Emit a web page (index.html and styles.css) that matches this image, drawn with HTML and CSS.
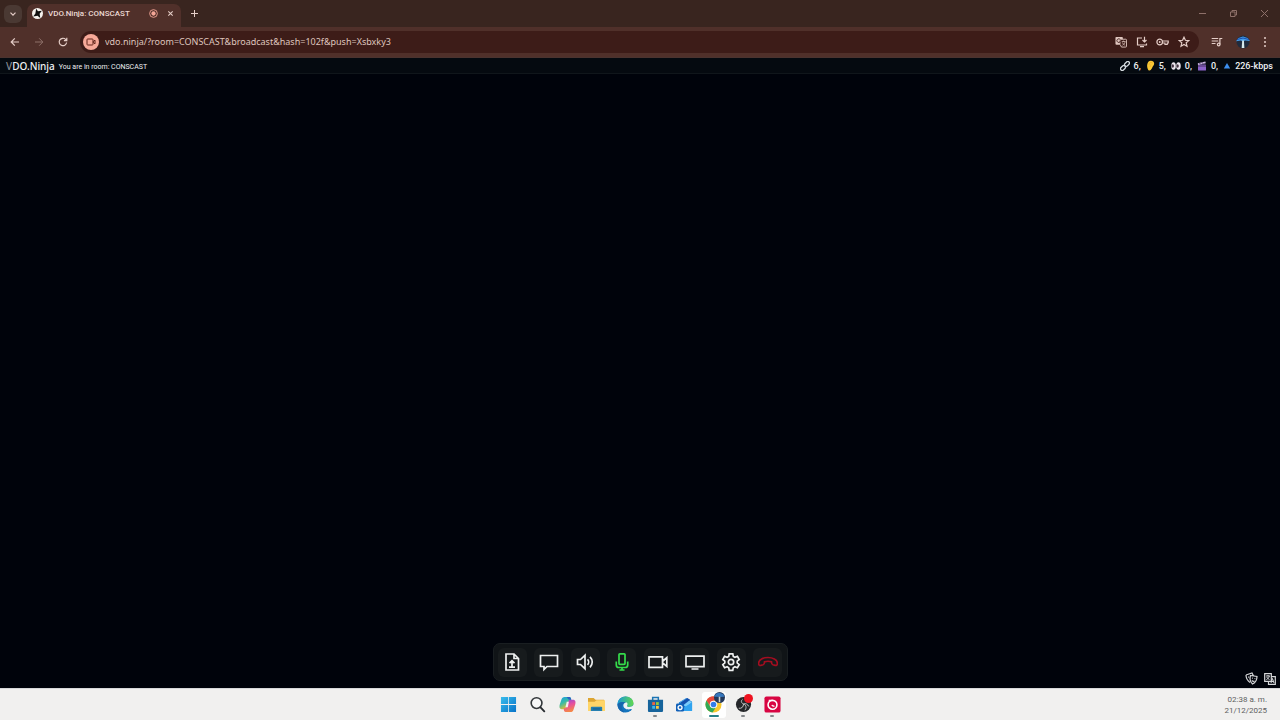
FILE: index.html
```html
<!DOCTYPE html>
<html lang="en">
<head>
<meta charset="utf-8">
<title>VDO.Ninja: CONSCAST</title>
<link rel="stylesheet" href="styles.css">
</head>
<body>
<div class="screen">
  <header class="tabstrip">
    <button class="tab-search" aria-label="Search tabs"><svg width="8" height="8" viewBox="0 0 8 8"><path d="M1.500 2.700 4 5.200l2.500-2.500" class="line"/></svg></button>
    <div class="tab">
      <svg width="11" height="11" viewBox="0 0 12 12"><circle cx="6" cy="6" r="6" fill="#f5f2ee"/><path d="M4.500.8 6.500 3.600 10.800 3 8.300 6.300 9 10.800 6 8.400 1.300 9.200 3.700 6Z" fill="#111"/></svg>
      <span class="tab-title">VDO.Ninja: CONSCAST</span>
      <svg width="9" height="9" viewBox="0 0 10 10"><circle cx="5" cy="5" r="4.300" fill="none" stroke="#f3a697"/><circle cx="5" cy="5" r="2.400" fill="#f3a697"/></svg>
      <button class="plain tab-close" aria-label="Close tab"><svg width="7" height="7" viewBox="0 0 8 8"><path d="m1.500 1.500 5 5m0-5-5 5" class="line"/></svg></button>
    </div>
    <button class="plain new-tab" aria-label="New tab"><svg width="9" height="9" viewBox="0 0 9 9"><path d="M4.500 1v7M1 4.500h7" class="line thin"/></svg></button>
    <div class="window-controls">
      <button class="plain" aria-label="Minimize"><svg width="9" height="9" viewBox="0 0 9 9"><path d="M1 4.500h7" class="dim"/></svg></button>
      <button class="plain" aria-label="Restore"><svg width="9" height="9" viewBox="0 0 9 9"><path d="M1.500 3h4.500v4.500H1.500ZM3 3V1.500h4.500V6H6" class="dim"/></svg></button>
      <button class="plain" aria-label="Close"><svg width="9" height="9" viewBox="0 0 9 9"><path d="m1 1 7 7m0-7L1 8" class="dim"/></svg></button>
    </div>
  </header>

  <nav class="toolbar">
    <div class="nav-buttons">
      <button class="plain" aria-label="Back"><svg width="10" height="10" viewBox="0 0 10 10"><path d="M9 5H1.200M4.800 1.300 1.200 5l3.600 3.700" class="line"/></svg></button>
      <button class="plain" aria-label="Forward" disabled><svg width="10" height="10" viewBox="0 0 10 10"><path d="M1 5h7.800M5.200 1.300 8.800 5 5.200 8.700" class="dim"/></svg></button>
      <button class="plain" aria-label="Reload"><svg width="10" height="10" viewBox="0 0 10 10"><path d="M8.600 5.500A3.700 3.700 0 1 1 7.600 2.400L8.500 3.400M8.800.8v2.900H5.900" class="line"/></svg></button>
    </div>
    <div class="omnibox">
      <button class="camera" aria-label="Camera in use"><svg width="10" height="10" viewBox="0 0 10 10"><rect x="1" y="2" width="6" height="6" rx=".7"/><path d="m7.300 4.500 1.700-1.300v3.600L7.300 5.500Z"/></svg></button>
      <input class="address" type="text" aria-label="Address" value="vdo.ninja/?room=CONSCAST&amp;broadcast&amp;hash=102f&amp;push=Xsbxky3">
      <div class="omni-icons">
        <button class="plain" aria-label="Translate"><svg width="12" height="12" viewBox="0 0 13 12"><rect x=".5" y=".5" width="8" height="8.500" rx="1" fill="#e0c6bf"/><path d="M6 3h5.500a1 1 0 0 1 1 1v6.500a1 1 0 0 1-1 1H7L5.800 9" fill="#3d1c18" stroke="#e0c6bf"/><path d="M7.300 5.500h4M9.300 4.500v1M11 5.500c-.3 2-1.500 3.300-3 4M8 6.500c.4 1.200 1.600 2.400 3 3" fill="none" stroke="#e0c6bf" stroke-width=".8"/><path d="M5.800 3.500a2 2 0 1 0 .2 1.700H4.600" fill="none" stroke="#3d1c18" stroke-width=".9"/></svg></button>
        <button class="plain" aria-label="Install app"><svg width="12" height="12" viewBox="0 0 12 12"><path d="M6 2H1.500v7h9V7.500M4 10.700h4M8.500.8v5M6.500 4l2 2 2-2" class="line"/></svg></button>
        <button class="plain" aria-label="Passwords"><svg width="13" height="10" viewBox="0 0 13 10"><circle cx="3.700" cy="5" r="2.800" class="line"/><circle cx="3.700" cy="5" r=".9" fill="#e5cec8"/><path d="M6.400 4h5.800v2h-1v1.500H9V6H6.400" class="line"/></svg></button>
        <button class="plain" aria-label="Bookmark"><svg width="12" height="12" viewBox="0 0 12 12"><path d="m6 1.200 1.400 3.100 3.400.3-2.600 2.200.8 3.400-3-1.800-3 1.800.8-3.400-2.600-2.200 3.400-.3Z" class="line"/></svg></button>
      </div>
    </div>
    <div class="right-icons">
      <button class="plain" aria-label="Media"><svg width="12" height="10" viewBox="0 0 12 10"><path d="M.7 1.500h6.500M.7 4h6.500M.7 6.500h3.800M8.900 7.500V1.500h2.400" class="line"/><circle cx="7.700" cy="7.500" r="1.300" class="line"/></svg></button>
      <button class="plain" aria-label="Profile"><svg width="14" height="14" viewBox="0 0 14 14"><circle cx="7" cy="7" r="6.500" fill="#202b3d"/><path d="M0 6.200 2.500 3 7 1.500 11.500 3 14 6l-5-.5L7 6.700 4.800 5.500Z" fill="#459de9"/><path d="m1 4.500 6-1.500 6 1.500" stroke="#174cad" fill="none"/><path d="M6.200 5.500h1.700l.5 7.500H5.700Z" fill="#d7ebee"/></svg></button>
      <button class="plain" aria-label="Menu"><svg width="4" height="12" viewBox="0 0 4 12" fill="#e5cec8"><circle cx="2" cy="2" r="1"/><circle cx="2" cy="6" r="1"/><circle cx="2" cy="10" r="1"/></svg></button>
    </div>
  </nav>

  <main class="page">
    <div class="room-bar">
      <a class="brand" href="#"><span class="brand-v">V</span>DO.Ninja</a>
      <span class="room-name">You are in room: CONSCAST</span>
      <div class="stats">
        <span class="stat"><svg width="10" height="10" viewBox="0 0 10 10" fill="none" stroke="#d5dbe0" stroke-width="1.300"><rect x="4.200" y="1.200" width="5.600" height="3.400" rx="1.700" transform="rotate(-45 7 2.900)"/><rect x=".2" y="5.300" width="5.600" height="3.400" rx="1.700" transform="rotate(-45 3 7)"/></svg>6,</span>
        <span class="stat"><svg width="9" height="11" viewBox="0 0 9 11"><path d="M2 9.500C.5 6.500.7 1 4.700.7 8 .5 9 3.500 7.500 5.500 6 7.500 5.500 10.300 3.500 10.500c-.8 0-1.200-.4-1.500-1Z" fill="#f8c736"/><path d="M3 5C3 2.500 5.800 1.500 6.500 3.300M4 7c.8-1 0-1.700.8-2.500" fill="none" stroke="#e8a92c" stroke-width=".8"/></svg>5,</span>
        <span class="stat"><svg width="10" height="10" viewBox="0 0 11 10"><ellipse cx="2.800" cy="5" rx="2.500" ry="4.200" fill="#eee7ef"/><ellipse cx="8.200" cy="5" rx="2.500" ry="4.200" fill="#eee7ef"/><ellipse cx="2" cy="5" rx="1.300" ry="2" fill="#443442"/><ellipse cx="7.300" cy="5" rx="1.300" ry="2" fill="#443442"/></svg>0,</span>
        <span class="stat"><svg width="10" height="10" viewBox="0 0 10 10"><rect x="1" y="3.500" width="8" height="6" rx=".6" fill="#8b63c9"/><path d="m.8 2.300 7.600-1.700.4 1.600L1 4Z" fill="#c7b4df"/><path d="m2.500 2 1 1.300M5 1.300l1 1.400M1 5h8" stroke="#493461"/></svg>0,</span>
        <span class="stat rate"><svg width="8" height="8" viewBox="0 0 8 8"><path d="m4 1 3.200 5.500H.8Z" fill="#3d8ff0"/></svg>226-kbps</span>
      </div>
    </div>

    <div class="stage"></div>

    <div class="dock-row">
      <div class="dock">
        <button class="control" aria-label="Share file"><svg viewBox="0 0 20 20"><path d="M4 2h8l4.500 4.500V18H4ZM12 2v4.500h4.500M10 15V9.300M7.500 11.200 10 8.700l2.500 2.500M7 15.200h6"/></svg></button>
        <button class="control" aria-label="Chat"><svg viewBox="0 0 20 20"><path d="M1.500 3.500h17v11H8l-3 3v-3H1.500Z"/></svg></button>
        <button class="control" aria-label="Speaker"><svg viewBox="0 0 20 20"><path d="M2.500 7.500h3L10 3.300v13.400l-4.500-4.200h-3ZM12.500 7.300c1.500 1.500 1.500 4 0 5.500M15 4.800c3 3 3 7.500 0 10.500"/></svg></button>
        <button class="control live" aria-label="Microphone"><svg viewBox="0 0 20 20"><rect x="7" y="1.800" width="6" height="10.500" rx=".8"/><path d="M4.300 9.500V13c0 1.700 1 2.500 2.500 2.500h6.400c1.500 0 2.500-.8 2.500-2.500V9.500M10 15.500v2.800M7.500 18h5"/></svg></button>
        <button class="control" aria-label="Camera"><svg viewBox="0 0 20 20"><path d="M1 4.800h13.500v10.500H1ZM15 9l3.800-3.300v8.800L15 11.200"/></svg></button>
        <button class="control" aria-label="Share screen"><svg viewBox="0 0 20 20"><path d="M1 4.200h18v10.500H1ZM6.500 17h7"/></svg></button>
        <button class="control" aria-label="Settings"><svg viewBox="0 0 20 20"><path d="M8.200 1.800h3.600l.5 2.600 1.600.9 2.500-.9 1.800 3.100-2 1.700v1.700l2 1.700-1.800 3.100-2.500-.9-1.600.9-.5 2.600H8.200l-.5-2.600-1.600-.9-2.500.9-1.800-3.100 2-1.700V9.200l-2-1.700 1.800-3.100 2.500.9 1.600-.9Z"/><circle cx="10" cy="10" r="2.700"/></svg></button>
        <button class="control hangup" aria-label="Hang up"><svg viewBox="0 0 20 20"><path d="M.6 11.200C1 3.600 19 3.600 19.400 11.200c0 1.900-1 2.500-2.200 2.200l-2.300-.6c-1-.3-1.400-.9-1.400-2.900-2.200-.8-4.800-.8-7 0 0 2-.4 2.600-1.400 2.900l-2.300.6c-1.200.3-2.200-.3-2.200-2.200Z"/></svg></button>
      </div>
    </div>
    <div class="corner-icons">
      <button class="plain" aria-label="Report"><svg width="13" height="13" viewBox="0 0 13 13" fill="none" stroke="#d5d7d9" stroke-width="1.200"><path d="m1 3 6-2 1.300 2.500M1 3c0 3 1.200 5.500 4 7.500M5.500 3.500l6.500 1c0 3.500-1.500 6-4.500 7.500-2-2-3-5.500-2-8.500Z"/><path d="m7 6 1 .3m1.500.2.800.2M6.800 8.500c1 1 1.800 1.100 2.700.5M3 5l1 .2"/></svg></button>
      <button class="plain" aria-label="Language"><svg width="12" height="12" viewBox="0 0 12 12"><path d="M.7.700h6.600v7.600H.7ZM4.500 8.300v3h6.800V3.700H7.300" fill="none" stroke="#d5d7d9" stroke-width="1.200"/><path d="M2 3h4M4 2v1M5.300 3C5 5 3.500 6 2.300 6.500M2.700 4c.5 1.200 1.500 2 2.800 2.500M7 10l1.500-4.500L10 10M7.500 8.500h2" fill="none" stroke="#d5d7d9"/></svg></button>
    </div>
  </main>

  <footer class="taskbar">
    <div class="apps">
      <button class="app" aria-label="Start"><svg viewBox="0 0 18 18"><defs><linearGradient id="win" x2="1" y2="1"><stop stop-color="#39bcec"/><stop offset="1" stop-color="#0873c8"/></linearGradient></defs><path d="M1 1h7.600v7.600H1ZM9.400 1H17v7.600H9.400ZM1 9.400h7.600V17H1ZM9.400 9.400H17V17H9.400Z" fill="url(#win)"/></svg></button>
      <button class="app" aria-label="Search"><svg viewBox="0 0 18 18"><circle cx="8" cy="7.500" r="5.700" fill="#f7f7f7" stroke="#34383b" stroke-width="1.700"/><path d="m12.200 12 4 4.200" stroke="#292d31" stroke-width="2" stroke-linecap="round"/></svg></button>
      <button class="app" aria-label="Copilot"><svg viewBox="0 0 18 18"><defs><linearGradient id="coa" x2=".5" y2="1"><stop stop-color="#189be5"/><stop offset=".5" stop-color="#39bca5"/><stop offset="1" stop-color="#f5bd28"/></linearGradient><linearGradient id="cob" x2=".3" y2="1"><stop stop-color="#884ddb"/><stop offset=".5" stop-color="#e7509d"/><stop offset="1" stop-color="#f58649"/></linearGradient></defs><path d="M6 1h5c1 0 1.500.8 1.800 1.800L13 5h-2L8 12.500c-.5 1-1 1.500-2 1.500H3C.5 14 0 11.500 1 8.500l1.600-4.700C3.200 2 4 1 6 1Z" fill="url(#coa)"/><path d="M12 17H7c-1 0-1.500-.8-1.800-1.800L5 13h2l3-7.500c.5-1 1-1.500 2-1.500h3c2.500 0 3 2.500 2 5.500l-1.600 4.700C14.800 16 14 17 12 17Z" fill="url(#cob)"/><path d="M8.200 6h2.300L9.300 12H6.800Z" fill="#f4f2f1"/><path d="M8 1h3c1.500 0 1.700 1.500 2 3h-2c-1 0-1.700-1.500-3-3Z" fill="#2c62c4"/></svg></button>
      <button class="app" aria-label="File Explorer"><svg viewBox="0 0 18 18"><path d="M0 2h6l2 2h9v12H0Z" fill="#dda532"/><path d="M0 6h7l2-1.500h9V16H0Z" fill="#ffd568"/><path d="M3 16v-3.500a1 1 0 0 1 1-1h10a1 1 0 0 1 1 1V16Z" fill="#247fb1"/><path d="M5 13.700h8" stroke="#165887"/></svg></button>
      <button class="app" aria-label="Edge"><svg viewBox="0 0 18 18"><defs><linearGradient id="edge" x2="1"><stop stop-color="#1798d7"/><stop offset="1" stop-color="#62d94e"/></linearGradient></defs><circle cx="9" cy="9" r="8.500" fill="#1575be"/><path d="M.5 9C.5 3.500 5 .5 9 .5c5 0 8.500 3.500 8.500 7.200 0 2.500-2 4-4.500 4-2 0-2.700-.8-2.300-1.600C11 7 5 4 .5 9Z" fill="url(#edge)"/><path d="M10 7c-2 0-3.300 1.200-3.300 3 0 3 4 5.200 8.300 3.700L18 15V8.500c-1 2.300-3 3.200-5 3.200-2 0-2.700-.8-2.300-1.600.6-1 .6-2-.2-3.100Z" fill="#f0f3f5"/><path d="M.5 9c1.500-3 6.500-3.500 8.500-1.500-2-.5-4 1.500-4 4 0 2 1 4 3 5.900C3.500 17 .5 13 .5 9Z" fill="#1766ad"/></svg></button>
      <button class="app running" aria-label="Microsoft Store"><svg viewBox="0 0 18 18"><path d="M6 5V1.700h6V5" fill="none" stroke="#1c75b5" stroke-width="1.600"/><path d="M1 4h16v11.500c0 1-.7 1.500-1.500 1.500h-13C1.500 17 1 16.300 1 15.500Z" fill="#17649c"/><path d="M5.500 6.500h3v3h-3Z" fill="#ef6542"/><path d="M9.500 6.500h3v3h-3Z" fill="#91c83e"/><path d="M5.500 10.500h3v3h-3Z" fill="#3bb8ec"/><path d="M9.500 10.500h3v3h-3Z" fill="#ffc83d"/></svg></button>
      <button class="app" aria-label="Outlook"><svg viewBox="0 0 18 18"><path d="m3 7 8-5 6 4v9.500H4Z" fill="#1684d8"/><path d="m4 7 7-4.500L17 7l-6 5Z" fill="#79cbfa"/><path d="m9 12 8-5.500V16H6Z" fill="#30a3ef"/><path d="m4 7.500 8-5.500 3 2-7 5.500Z" fill="#1451ae"/><rect y="8" width="8.500" height="8.500" rx="1.500" fill="#1160b8"/><circle cx="4.300" cy="12.200" r="2.100" fill="none" stroke="#fff" stroke-width="1.400"/></svg></button>
      <button class="app active" aria-label="Chrome"><svg viewBox="0 0 18 18"><circle cx="9" cy="9" r="8.500" fill="#f7c72e"/><path d="M1.600 4.700a8.500 8.500 0 0 1 14.800 0H9L5.500 11Z" fill="#e6493c"/><path d="M1.600 4.700a8.500 8.500 0 0 0 6.400 12.700L12 11H5.500Z" fill="#31a957"/><circle cx="9" cy="9" r="4" fill="#fff"/><circle cx="9" cy="9" r="3" fill="#327de9"/></svg><svg class="avatar" viewBox="0 0 14 14"><circle cx="7" cy="7" r="7" fill="#24385a"/><path d="m0 6 3-4 4-1 5 2 1 3-4 .5Z" fill="#3677bd"/><path d="M6 6h2v7H6Z" fill="#ced5d8"/></svg></button>
      <button class="app running" aria-label="OBS Studio"><svg viewBox="0 0 18 18"><circle cx="9" cy="9" r="8" fill="#25272a"/><path d="M8 3.500c-2 1.500-1.500 4 1 5 2-1 4.500 0 5.500 2.500M9 8.500c0 3-2 5-5 4.500M9 8.500c3 1 3.500 4 1.500 6.500" fill="none" stroke="#c8c8c8"/></svg><span class="badge"></span></button>
      <button class="app running" aria-label="Recorder"><svg viewBox="0 0 18 18"><rect x=".5" y=".5" width="17" height="17" rx="2" fill="#d80542"/><circle cx="9" cy="9.300" r="4.700" fill="none" stroke="#fff" stroke-width="1.700"/><path d="M8.500 9.300a1.700 1.700 0 0 0 2.500 1.200M5 4.600h4" fill="none" stroke="#fff" stroke-width="1.400"/></svg></button>
    </div>
    <div class="clock"><time>02:38 a. m.</time><time>21/12/2025</time></div>
  </footer>
</div>
</body>
</html>
```

FILE: styles.css
```css
* { box-sizing: border-box; }
body { margin: 0; font-family: "Noto Sans", "Open Sans", sans-serif; background: #00030b; }
button, input { font: inherit; color: inherit; }
svg { display: block; flex: none; }
.screen { min-height: 100vh; display: flex; flex-direction: column; }
.plain { display: grid; place-items: center; border: 0; padding: 0; background: none; }
.line { fill: none; stroke: #e5cec8; stroke-width: 1.2; }
.thin { stroke-width: 1; }
.dim { fill: none; stroke: #8e7069; stroke-width: 1; }

.tabstrip { height: 27px; display: flex; align-items: center; background: #39251f; padding-left: 4px; }
.tab-search { width: 18px; height: 18px; display: grid; place-items: center; padding: 0; border: 0; border-radius: 6px; background: #4a3933; }
.tab { align-self: stretch; width: 154px; margin: 4px 0 0 5px; padding: 0 6px 4px 5px; display: flex; align-items: center; gap: 5px; background: #50302a; border-radius: 7px 7px 0 0; }
.tab-title { flex: 1; font-size: 8px; line-height: 12px; color: #ecd9d4; white-space: nowrap; font-family: Roboto, sans-serif; font-weight: 500; }
.tab-close { width: 10px; margin-left: 2px; }
.new-tab { width: 18px; height: 18px; margin-left: 4px; }
.window-controls { margin-left: auto; display: flex; }
.window-controls button { width: 31px; height: 26px; }

.toolbar { height: 31px; display: flex; align-items: center; background: #50302a; border-bottom: 1px solid #4b332f; }
.nav-buttons { width: 80px; padding-left: 9px; display: flex; gap: 12px; }
.nav-buttons button { width: 12px; height: 20px; }
.omnibox { flex: 1; height: 22px; display: flex; align-items: center; border-radius: 11px; background: #3d1c18; padding: 0 9px 0 3px; }
.camera { width: 16px; height: 16px; padding: 0; border: 0; border-radius: 50%; background: #f7a999; display: grid; place-items: center; }
.camera svg { fill: none; stroke: #602319; }
.address { flex: 1; min-width: 0; margin-left: 6px; padding: 0; border: 0; outline: 0; background: none; font-size: 9px; line-height: 14px; color: #dfc5be; }
.omni-icons { display: flex; gap: 8px; }
.omni-icons button { width: 13px; height: 16px; }
.right-icons { width: 81px; display: flex; align-items: center; justify-content: space-between; padding: 0 13px 0 12px; }

.page { flex: 1; display: flex; flex-direction: column; position: relative; background: #00030b; }
.room-bar { height: 16px; padding: 0 7px 0 6px; display: flex; align-items: center; background: #050a10; border-bottom: 1px solid #10161b; color: #eef0f2; white-space: nowrap; }
.brand { font-size: 10px; line-height: 16px; font-weight: 500; color: inherit; text-decoration: none; }
.brand-v { color: #858b92; }
.room-name { margin: 3px 0 0 4px; font-size: 7px; line-height: 12px; font-family: Roboto, sans-serif; }
.stats { margin-left: auto; display: flex; gap: 5px; font-size: 9px; line-height: 14px; font-family: Roboto, sans-serif; font-weight: 500; }
.stat { display: flex; align-items: center; gap: 4px; }
.stage { flex: 1; }
.dock-row { display: flex; justify-content: center; padding-bottom: 7px; }
.dock { width: 295px; height: 38px; padding: 0 4px; display: flex; align-items: center; justify-content: space-between; background: #101417; border: 1px solid #191e21; border-radius: 7px; }
.control { width: 29px; height: 29px; padding: 0; border: 0; border-radius: 6px; background: #171b1d; color: #eef0f0; display: grid; place-items: center; }
.control svg { width: 20px; height: 20px; fill: none; stroke: currentColor; stroke-width: 1.7; }
.live { color: #35dc4b; }
.hangup { color: #a30d20; }
.corner-icons { position: absolute; right: 4px; bottom: 3px; display: flex; gap: 6px; }

.taskbar { height: 32px; display: grid; grid-template-columns: 1fr 289px 1fr; align-items: center; background: #f1f0ef; border-top: 1px solid #d7d8da; }
.apps { grid-column: 2; display: flex; justify-content: space-between; padding-left: 1px; }
.app { position: relative; width: 24px; height: 26px; padding: 0 0 1px; border: 0; border-radius: 3px; background: none; display: grid; place-items: center; }
.app > svg { width: 17px; height: 17px; }
.active { background: #fff; }
.running::after, .active::after { content: ""; position: absolute; bottom: 1px; left: 10px; width: 4px; height: 2px; border-radius: 1px; background: #85898c; }
.active::after { left: 7px; width: 10px; background: #287f87; }
.app > .avatar { position: absolute; top: 0; right: 1px; width: 11px; height: 11px; }
.badge { position: absolute; top: 2px; right: 2px; width: 9px; height: 9px; border-radius: 50%; background: #ee1320; }
.clock { padding-right: 13px; display: flex; flex-direction: column; align-items: flex-end; font-family: Roboto, sans-serif; font-size: 8px; line-height: 11px; color: #5d5e60; }
```
